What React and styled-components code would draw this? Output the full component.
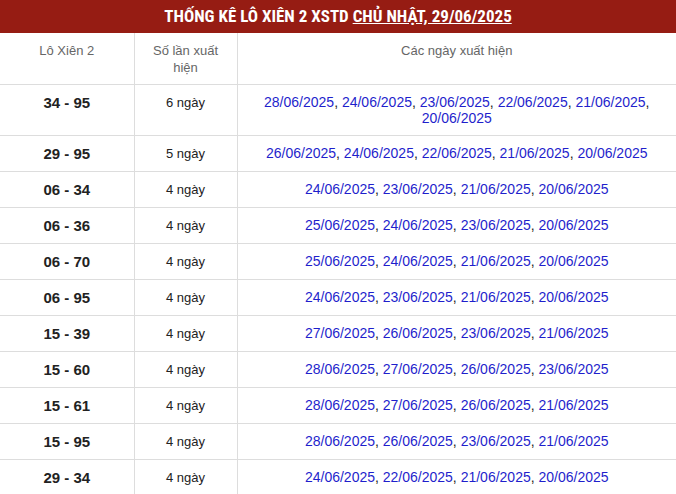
import React from "react";
import styled, { createGlobalStyle } from "styled-components";

const Global = createGlobalStyle`
  html, body { margin: 0; padding: 0; background: #fff; }
  body { font-family: "Liberation Sans", Arial, sans-serif; }
`;

const Table = styled.table`
  width: 676px;
  border-collapse: collapse;
  table-layout: fixed;
  font-family: "Liberation Sans", Arial, sans-serif;
`;

const TitleCell = styled.th`
  height: 33px;
  padding: 0 8px;
  background: #961c13;
  color: #fff;
  font-family: "Liberation Sans Narrow", "Roboto Condensed", "Liberation Sans", sans-serif;
  font-weight: 700;
  font-size: 17px;
  line-height: 33px;
  text-align: center;
`;

const TitleLink = styled.span`
  text-decoration: underline;
`;

const HeadCell = styled.th`
  padding: 9px 8px 8px;
  font-weight: 400;
  font-size: 13px;
  line-height: 17px;
  color: #666;
  text-align: center;
  vertical-align: top;
  border-bottom: 1px solid #ddd;
  border-left: ${(p) => (p.$first ? "none" : "1px solid #ddd")};
`;

const Cell = styled.td`
  padding: 9px 8px;
  line-height: ${(p) => p.$lh || 17}px;
  text-align: center;
  vertical-align: top;
  color: #222;
  border-bottom: 1px solid #ddd;
  border-left: ${(p) => (p.$first ? "none" : "1px solid #ddd")};
  font-size: ${(p) => p.$size || 14}px;
  font-weight: ${(p) => (p.$bold ? 700 : 400)};
`;

const DateLink = styled.span`
  color: #1f1fcc;
`;

const rows = [
  ["34 - 95", 6, ["28/06/2025", "24/06/2025", "23/06/2025", "22/06/2025", "21/06/2025", "20/06/2025"]],
  ["29 - 95", 5, ["26/06/2025", "24/06/2025", "22/06/2025", "21/06/2025", "20/06/2025"]],
  ["06 - 34", 4, ["24/06/2025", "23/06/2025", "21/06/2025", "20/06/2025"]],
  ["06 - 36", 4, ["25/06/2025", "24/06/2025", "23/06/2025", "20/06/2025"]],
  ["06 - 70", 4, ["25/06/2025", "24/06/2025", "21/06/2025", "20/06/2025"]],
  ["06 - 95", 4, ["24/06/2025", "23/06/2025", "21/06/2025", "20/06/2025"]],
  ["15 - 39", 4, ["27/06/2025", "26/06/2025", "23/06/2025", "21/06/2025"]],
  ["15 - 60", 4, ["28/06/2025", "27/06/2025", "26/06/2025", "23/06/2025"]],
  ["15 - 61", 4, ["28/06/2025", "27/06/2025", "26/06/2025", "21/06/2025"]],
  ["15 - 95", 4, ["28/06/2025", "26/06/2025", "23/06/2025", "21/06/2025"]],
  ["29 - 34", 4, ["24/06/2025", "22/06/2025", "21/06/2025", "20/06/2025"]],
];

export default function App() {
  return (
    <>
      <Global />
      <Table>
        <colgroup>
          <col style={{ width: 134 }} />
          <col style={{ width: 103 }} />
          <col />
        </colgroup>
        <thead>
          <tr>
            <TitleCell colSpan={3}>
              THỐNG KÊ LÔ XIÊN 2 XSTD <TitleLink>CHỦ NHẬT, 29/06/2025</TitleLink>
            </TitleCell>
          </tr>
          <tr>
            <HeadCell $first>Lô Xiên 2</HeadCell>
            <HeadCell>Số lần xuất hiện</HeadCell>
            <HeadCell>Các ngày xuất hiện</HeadCell>
          </tr>
        </thead>
        <tbody>
          {rows.map(([pair, count, dates]) => (
            <tr key={pair}>
              <Cell $first $bold $size={15}>{pair}</Cell>
              <Cell $size={13}>{count} ngày</Cell>
              <Cell $lh={16}>
                {dates.map((d, i) => (
                  <React.Fragment key={d}>
                    <DateLink>{d}</DateLink>
                    {i < dates.length - 1 ? ", " : ""}
                  </React.Fragment>
                ))}
              </Cell>
            </tr>
          ))}
        </tbody>
      </Table>
    </>
  );
}
